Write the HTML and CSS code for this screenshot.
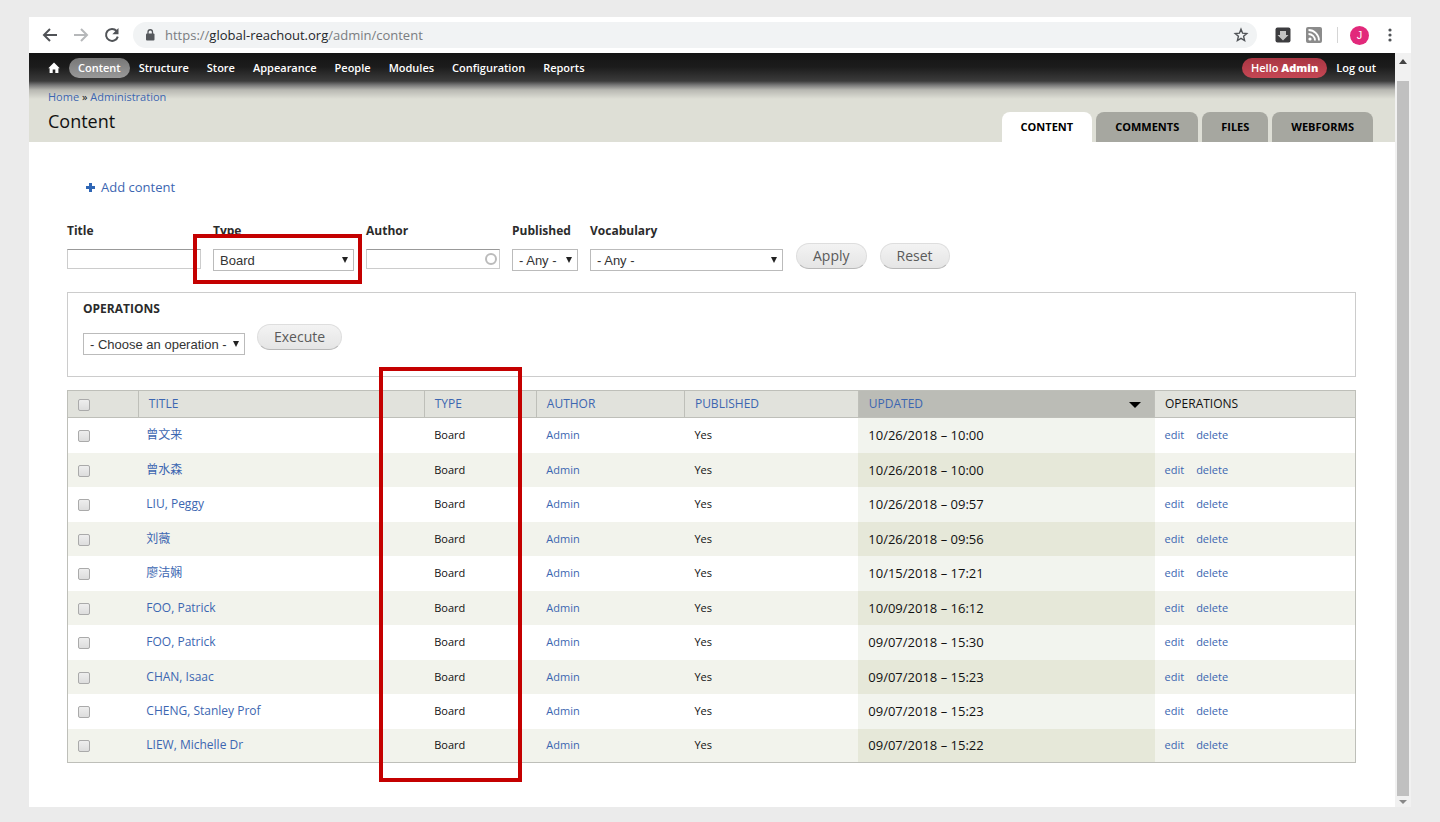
FILE: index.html
```html
<!DOCTYPE html>
<html lang="en">
<head>
<meta charset="utf-8">
<meta name="viewport" content="width=device-width, initial-scale=1">
<title>Content</title>
<link rel="stylesheet" href="styles.css">
</head>
<body>
<div class="window">
  <div class="chrome">
    <button class="chrome-btn" aria-label="Back"><svg width="16" height="16" viewBox="0 0 16 16"><path d="M15 8H2M8 2L2 8l6 6" fill="none" stroke="#505357" stroke-width="2"/></svg></button>
    <button class="chrome-btn" aria-label="Forward"><svg width="16" height="16" viewBox="0 0 16 16"><path d="M1 8h13M8 2l6 6-6 6" fill="none" stroke="#b6b8ba" stroke-width="2"/></svg></button>
    <button class="chrome-btn" aria-label="Reload"><svg width="16" height="16" viewBox="0 0 16 16"><path d="M12.6 4A6 6 0 1 0 13.8 9.600" fill="none" stroke="#505357" stroke-width="2"/><path d="M14.500 1v6.200H8.300z" fill="#505357"/></svg></button>
    <div class="omnibox">
      <svg width="10" height="12" viewBox="0 0 10 12"><rect x="1" y="4.500" width="8.500" height="7" rx="1" fill="#55585c"/><path d="M3 5V3a2.250 2.250 0 0 1 4.500 0v2" fill="none" stroke="#55585c" stroke-width="1.300"/></svg>
      <span class="url">https://<span class="host">global-reachout.org</span>/admin/content</span>
      <button class="chrome-btn star" aria-label="Bookmark"><svg width="16" height="16" viewBox="0 0 16 16"><path d="M8 2.200l1.600 4 4.200.300-3.200 2.800 1 4.200L8 11.300l-3.600 2.200 1-4.200-3.200-2.800L6.400 6.200z" fill="none" stroke="#505357" stroke-width="1.400"/></svg></button>
    </div>
    <div class="extensions">
      <button class="chrome-btn" aria-label="Downloader"><svg width="16" height="16" viewBox="0 0 16 16"><rect x="0.500" y="0.500" width="15" height="15" rx="2" fill="#3c3c3f"/><path d="M5 4h6v4h2.500L8 13.500 2.500 8H5z" fill="#c4c4c4"/></svg></button>
      <button class="chrome-btn" aria-label="Feeds"><svg width="16" height="16" viewBox="0 0 16 16"><rect width="16" height="16" rx="2" fill="#8b8b8b"/><circle cx="4" cy="12" r="1.600" fill="#fff"/><path d="M2.500 7a6.500 6.500 0 0 1 6.500 6.500M2.500 3A10.500 10.500 0 0 1 13 13.500" fill="none" stroke="#fff" stroke-width="1.800"/></svg></button>
      <span class="divider"></span>
      <button class="avatar" aria-label="Profile">J</button>
      <button class="chrome-btn" aria-label="Menu"><svg width="16" height="16" viewBox="0 0 16 16" fill="#505357"><circle cx="8" cy="3" r="1.600"/><circle cx="8" cy="8" r="1.600"/><circle cx="8" cy="13" r="1.600"/></svg></button>
    </div>
  </div>

  <div class="viewport">
    <div class="page">
      <header class="page-header">
        <nav class="admin-bar">
          <a class="home" href="#" aria-label="Home"><svg width="12" height="12" viewBox="0 0 12 12"><path d="M6 .5L11.700 6.300H10.400V11H7.300V7.500H4.700V11H1.600V6.300H.3z" fill="#fff"/></svg></a>
          <a class="pill active" href="#">Content</a>
          <a class="pill" href="#">Structure</a>
          <a class="pill" href="#">Store</a>
          <a class="pill" href="#">Appearance</a>
          <a class="pill" href="#">People</a>
          <a class="pill" href="#">Modules</a>
          <a class="pill" href="#">Configuration</a>
          <a class="pill" href="#">Reports</a>
          <a class="pill user" href="#">Hello <strong>Admin</strong></a>
          <a class="pill" href="#">Log out</a>
        </nav>
        <div class="branding">
          <div class="heading">
            <div class="breadcrumb"><a href="#">Home</a> » <a href="#">Administration</a></div>
            <h1>Content</h1>
          </div>
          <nav class="tabs">
            <a class="tab current" href="#">CONTENT</a>
            <a class="tab" href="#">COMMENTS</a>
            <a class="tab" href="#">FILES</a>
            <a class="tab" href="#">WEBFORMS</a>
          </nav>
        </div>
      </header>

      <main class="content">
        <a class="add-link" href="#"><svg width="9" height="9" viewBox="0 0 9 9"><path d="M4.500 0v9M0 4.500h9" stroke="#2f66b5" stroke-width="3"/></svg>Add content</a>

        <form class="filters">
          <div class="field text-field">
            <label for="title">Title</label>
            <input class="text" id="title" type="text">
          </div>
          <div class="field type-field">
            <label for="type">Type</label>
            <span class="select"><select id="type"><option>Board</option></select></span>
            <span class="highlight"></span>
          </div>
          <div class="field text-field">
            <label for="author">Author</label>
            <span class="lookup"><input class="text" id="author" type="text"></span>
          </div>
          <div class="field published-field">
            <label for="published">Published</label>
            <span class="select"><select id="published"><option>- Any -</option></select></span>
          </div>
          <div class="field vocabulary-field">
            <label for="vocabulary">Vocabulary</label>
            <span class="select"><select id="vocabulary"><option>- Any -</option></select></span>
          </div>
          <div class="buttons">
            <button class="button" type="button">Apply</button>
            <button class="button" type="button">Reset</button>
          </div>
        </form>

        <section class="operations">
          <label for="operation">OPERATIONS</label>
          <div class="operation-row">
            <span class="select"><select id="operation"><option>- Choose an operation -</option></select></span>
            <button class="button" type="button">Execute</button>
          </div>
        </section>

        <div class="table-wrap">
          <table>
            <colgroup><col class="c-check"><col class="c-title"><col class="c-type"><col class="c-author"><col class="c-published"><col class="c-updated"><col class="c-ops"></colgroup>
            <thead>
              <tr><th><input type="checkbox" aria-label="Select all"></th><th><a href="#">TITLE</a></th><th><a href="#">TYPE</a></th><th><a href="#">AUTHOR</a></th><th><a href="#">PUBLISHED</a></th><th class="sorted"><a href="#">UPDATED</a></th><th>OPERATIONS</th></tr>
            </thead>
            <tbody>
              <tr><td><input type="checkbox" aria-label="Select row 1"></td><td class="name"><a href="#" lang="zh">曾文来</a></td><td>Board</td><td><a href="#">Admin</a></td><td>Yes</td><td class="date">10/26/2018 – 10:00</td><td><a class="edit" href="#">edit</a><a href="#">delete</a></td></tr>
              <tr><td><input type="checkbox" aria-label="Select row 2"></td><td class="name"><a href="#" lang="zh">曾水森</a></td><td>Board</td><td><a href="#">Admin</a></td><td>Yes</td><td class="date">10/26/2018 – 10:00</td><td><a class="edit" href="#">edit</a><a href="#">delete</a></td></tr>
              <tr><td><input type="checkbox" aria-label="Select row 3"></td><td class="name"><a href="#">LIU, Peggy</a></td><td>Board</td><td><a href="#">Admin</a></td><td>Yes</td><td class="date">10/26/2018 – 09:57</td><td><a class="edit" href="#">edit</a><a href="#">delete</a></td></tr>
              <tr><td><input type="checkbox" aria-label="Select row 4"></td><td class="name"><a href="#" lang="zh">刘薇</a></td><td>Board</td><td><a href="#">Admin</a></td><td>Yes</td><td class="date">10/26/2018 – 09:56</td><td><a class="edit" href="#">edit</a><a href="#">delete</a></td></tr>
              <tr><td><input type="checkbox" aria-label="Select row 5"></td><td class="name"><a href="#" lang="zh">廖洁娴</a></td><td>Board</td><td><a href="#">Admin</a></td><td>Yes</td><td class="date">10/15/2018 – 17:21</td><td><a class="edit" href="#">edit</a><a href="#">delete</a></td></tr>
              <tr><td><input type="checkbox" aria-label="Select row 6"></td><td class="name"><a href="#">FOO, Patrick</a></td><td>Board</td><td><a href="#">Admin</a></td><td>Yes</td><td class="date">10/09/2018 – 16:12</td><td><a class="edit" href="#">edit</a><a href="#">delete</a></td></tr>
              <tr><td><input type="checkbox" aria-label="Select row 7"></td><td class="name"><a href="#">FOO, Patrick</a></td><td>Board</td><td><a href="#">Admin</a></td><td>Yes</td><td class="date">09/07/2018 – 15:30</td><td><a class="edit" href="#">edit</a><a href="#">delete</a></td></tr>
              <tr><td><input type="checkbox" aria-label="Select row 8"></td><td class="name"><a href="#">CHAN, Isaac</a></td><td>Board</td><td><a href="#">Admin</a></td><td>Yes</td><td class="date">09/07/2018 – 15:23</td><td><a class="edit" href="#">edit</a><a href="#">delete</a></td></tr>
              <tr><td><input type="checkbox" aria-label="Select row 9"></td><td class="name"><a href="#">CHENG, Stanley Prof</a></td><td>Board</td><td><a href="#">Admin</a></td><td>Yes</td><td class="date">09/07/2018 – 15:23</td><td><a class="edit" href="#">edit</a><a href="#">delete</a></td></tr>
              <tr><td><input type="checkbox" aria-label="Select row 10"></td><td class="name"><a href="#">LIEW, Michelle Dr</a></td><td>Board</td><td><a href="#">Admin</a></td><td>Yes</td><td class="date">09/07/2018 – 15:22</td><td><a class="edit" href="#">edit</a><a href="#">delete</a></td></tr>
            </tbody>
          </table>
          <span class="highlight"></span>
        </div>
      </main>
    </div>
    <div class="scrollbar">
      <span class="arrow-up"></span>
      <span class="thumb"></span>
      <span class="arrow-down"></span>
    </div>
  </div>
</div>
</body>
</html>
```

FILE: styles.css
```css
* { box-sizing: border-box; }

body {
  margin: 0;
  padding: 17px 29px 16px;
  background: #ebebeb;
  color: #111;
  font-family: "Open Sans", "Noto Sans CJK SC", sans-serif;
  font-size: 12px;
  line-height: 16px;
}

a { color: #3c66b1; text-decoration: none; }
button { font-family: inherit; cursor: pointer; }
svg { display: block; flex: none; }

/* Browser toolbar */
.chrome {
  display: flex;
  align-items: center;
  gap: 15px;
  height: 36px;
  padding: 0 13px;
  background: #fff;
}
.chrome-btn { padding: 0; border: 0; background: none; }
.omnibox {
  display: flex;
  flex: 1;
  align-items: center;
  gap: 10px;
  height: 26px;
  margin: 0 3px 0 -2px;
  padding: 0 8px 0 12px;
  border-radius: 13px;
  background: #f1f3f4;
}
.url { color: #7a7d81; font-size: 13px; }
.host { color: #25272b; }
.star { margin-left: auto; }
.extensions { display: flex; align-items: center; gap: 15px; }
.divider { width: 1px; height: 16px; background: #d5d5d5; }
.avatar {
  width: 19px;
  height: 19px;
  margin: 0 -2px 0 -3px;
  padding: 0;
  border: 0;
  border-radius: 50%;
  background: #e2297b;
  color: #fff;
  font-family: "Liberation Sans", sans-serif;
  font-size: 11px;
  line-height: 19px;
}

/* Viewport and scrollbar */
.viewport { display: flex; }
.page { flex: 1; min-width: 0; background: #fff; }
.scrollbar {
  display: flex;
  flex-direction: column;
  align-items: center;
  width: 16px;
  background: #f1f1f1;
}
.arrow-up, .arrow-down { border: 4px solid transparent; }
.arrow-up { margin: 3px 0 17px; border-width: 3px 4px 5px; border-bottom-color: #444; }
.arrow-down { margin-top: 4px; border-top-color: #888; border-bottom-width: 3px; }
.thumb { flex: 1; width: 12px; background: #c0c0c0; }

/* Header */
.page-header {
  background: linear-gradient(#141414 0, #1c1c1c 14px, #3b3b3b 28px, #777 32px, #b8b8b2 37px, #dedfd6 46px);
}
.admin-bar {
  display: flex;
  align-items: center;
  height: 30px;
  padding: 0 10px 0 19px;
}
.home { margin-right: 9px; }
.pill {
  padding: 2px 9px;
  border-radius: 10px;
  color: #fff;
  font-size: 11px;
  font-weight: 600;
  line-height: 16px;
}
.pill.active { background: linear-gradient(#777, #999); }
.pill.user { margin-left: auto; background: linear-gradient(#a93643, #c54754); }
.branding {
  display: flex;
  align-items: flex-end;
  justify-content: space-between;
  padding: 6px 22px 0 19px;
}
.heading { padding-bottom: 9px; }
.breadcrumb { font-size: 11px; line-height: 16px; }
h1 { margin: 5px 0 0; font-size: 18px; font-weight: 400; line-height: 23px; }
.tabs { display: flex; gap: 4px; }
.tab {
  padding: 7px 19px;
  border-radius: 8px 8px 0 0;
  background: #a6a7a0;
  color: #000;
  font-size: 11px;
  font-weight: 700;
}
.tab.current { background: #fff; }

/* Content */
.content { padding: 36px 39px 44px 38px; }
.add-link {
  display: flex;
  align-items: center;
  gap: 6px;
  margin: 0 0 27px 19px;
  font-size: 13px;
  line-height: 18px;
}
label { color: #2b2b2b; font-weight: 700; }
.filters { display: flex; align-items: flex-start; gap: 12px; }
.field { position: relative; display: flex; flex-direction: column; gap: 10px; }
.text-field { width: 134px; }
.type-field { width: 141px; }
.published-field { width: 66px; white-space: nowrap; }
.vocabulary-field { width: 193px; }
.text {
  display: block;
  width: 100%;
  height: 20px;
  border: 1px solid #ccc;
  border-top-color: #999;
  background: #fff;
}
.lookup { position: relative; }
.lookup::after {
  content: "";
  position: absolute;
  top: 4px;
  right: 3px;
  width: 8px;
  height: 8px;
  border: 2px solid #bbb;
  border-radius: 50%;
}
.select { position: relative; display: block; }
.select select {
  display: block;
  width: 100%;
  height: 22px;
  padding: 0 6px;
  border: 1px solid #bbb;
  border-radius: 0;
  background: #fff;
  color: #333;
  appearance: none;
  font-family: "Liberation Sans", sans-serif;
  font-size: 13px;
}
.select::after {
  content: "";
  position: absolute;
  top: 8px;
  right: 6px;
  border: 3px solid transparent;
  border-top: 6px solid #222;
  border-bottom: 0;
}
.buttons { display: flex; gap: 13px; padding: 20px 0 0 1px; }
.button {
  height: 26px;
  padding: 0 16px;
  border: 1px solid #dedede;
  border-bottom-color: #b8b8b8;
  border-radius: 13px;
  background: linear-gradient(#f3f3f3, #e5e5e5);
  color: #5a5a5a;
  font-size: 14px;
  line-height: 22px;
}
.operations {
  margin-top: 21px;
  padding: 8px 15px 26px;
  border: 1px solid #ccc;
}
.operation-row { display: flex; align-items: flex-end; gap: 12px; padding-top: 7px; }
.operation-row .select { width: 162px; margin-bottom: -5px; }

/* Table */
.table-wrap { position: relative; margin-top: 13px; }
table {
  width: 100%;
  border: 1px solid #bebfb9;
  border-collapse: collapse;
  table-layout: fixed;
  font-size: 11px;
}
.c-check { width: 5.5%; }
.c-title { width: 22.2%; }
.c-type { width: 8.7%; }
.c-author { width: 11.5%; }
.c-published { width: 13.5%; }
.c-updated { width: 23%; }
th {
  height: 27px;
  padding: 0 10px;
  border: 1px solid #bebfb9;
  background: #e1e2dc;
  font-size: 12px;
  font-weight: 400;
  text-align: left;
}
th.sorted { position: relative; background: #bbbcb6; }
th.sorted::after {
  content: "";
  position: absolute;
  top: 11px;
  right: 13px;
  border: 6px solid transparent;
  border-top-color: #000;
  border-bottom: 0;
}
td { height: 35px; padding: 0 10px; }
tr:nth-child(even) td { height: 34px; background: #f2f3ec; }
td.name { padding-left: 8px; font-size: 12px; }
td.date, tr:nth-child(even) td.date { font-size: 13px; }
td.date { background: #f2f4ee; }
tr:nth-child(even) td.date { background: #e6e8d9; }
.edit { margin-right: 12px; }
input[type="checkbox"] {
  display: block;
  width: 12px;
  height: 12px;
  margin: 2px 0 0;
  border: 1px solid #aaa;
  border-radius: 2px;
  background: linear-gradient(#eee, #ddd);
  appearance: none;
}

/* Callout frames */
.highlight { position: absolute; border: 4px solid #c40000; pointer-events: none; }
.field .highlight { top: 11px; right: -8px; left: -20px; height: 50px; }
.table-wrap .highlight { top: -23px; bottom: -19px; left: 24.2%; width: 11.1%; }
```
